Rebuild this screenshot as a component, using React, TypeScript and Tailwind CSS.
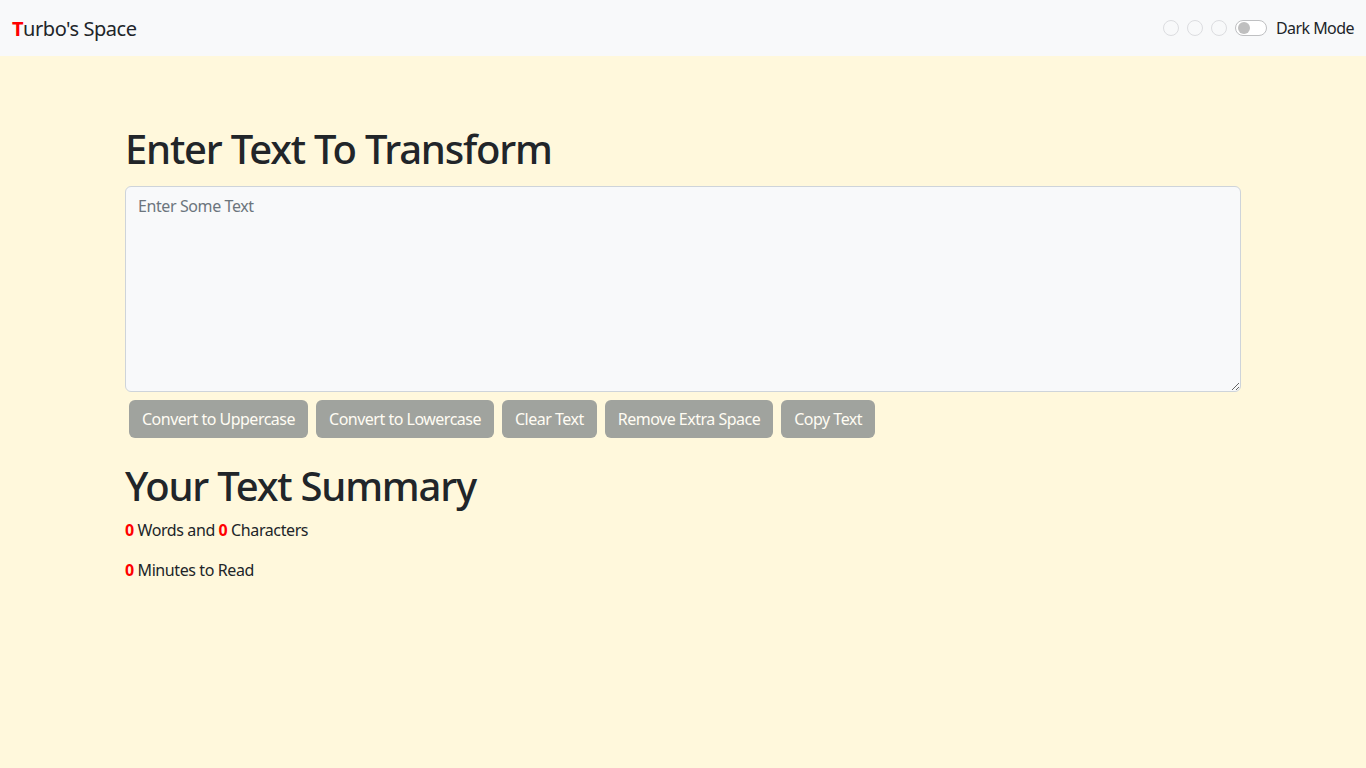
import { useState } from 'react'

const font = { fontFamily: '"Noto Sans", "Open Sans", sans-serif' }

export default function App() {
  const [text, setText] = useState('')

  const words = text.split(/\s+/).filter((w) => w.length > 0).length
  const chars = text.length
  const minutes = 0.008 * words

  const btn =
    'mx-1 rounded-md border border-transparent bg-[#a0a39e] px-3 py-[6px] text-base leading-6 tracking-[-0.5px] text-[#fffcf3] disabled:cursor-default'

  return (
    <div className="min-h-screen bg-[#fff8dc] text-[#212529] tracking-[-0.4px]" style={font}>
      <nav className="flex h-14 items-center justify-between bg-[#f8f9fa] px-3">
        <a className="pt-[2px] text-xl leading-[30px] tracking-[-0.45px] text-[#212529]" href="#">
          <span className="font-bold text-[#ff0000]">T</span>urbo's Space
        </a>
        <div className="flex items-center">
          <span className="mr-2 h-4 w-4 rounded-full border border-[#dcdde0] bg-[#f8f9fa]" />
          <span className="mr-2 h-4 w-4 rounded-full border border-[#dcdde0] bg-[#f8f9fa]" />
          <span className="mr-2 h-4 w-4 rounded-full border border-[#dcdde0] bg-[#f8f9fa]" />
          <span className="flex h-4 w-8 items-center rounded-full border border-[#bfc0c2] bg-white px-[2px]">
            <span className="h-3 w-3 rounded-full bg-[#bfbfbf]" />
          </span>
          <span className="ml-[9px] text-base leading-6 tracking-[-0.55px]">Dark Mode</span>
        </div>
      </nav>

      <div className="mx-auto w-[1140px] px-3 pt-[69px]">
        <h1 className="mb-[13px] text-[40px] font-medium leading-[48px] tracking-[-1.2px]">Enter Text To Transform</h1>
        <textarea
          className="block h-[206px] w-full resize-y rounded-md border border-[#ced4da] bg-[#f8f9fa] px-3 pb-[6px] pt-[7px] text-base leading-6 text-[#212529] outline-none placeholder:text-[#6c757d]"
          placeholder="Enter Some Text"
          value={text}
          onChange={(e) => setText(e.target.value)}
        />
        <div className="mt-2 flex">
          <button className={btn} disabled={chars === 0} onClick={() => setText(text.toUpperCase())}>
            Convert to Uppercase
          </button>
          <button className={btn} disabled={chars === 0} onClick={() => setText(text.toLowerCase())}>
            Convert to Lowercase
          </button>
          <button className={btn} disabled={chars === 0} onClick={() => setText('')}>
            Clear Text
          </button>
          <button className={btn} disabled={chars === 0} onClick={() => setText(text.split(/[ ]+/).join(' '))}>
            Remove Extra Space
          </button>
          <button className={btn} disabled={chars === 0} onClick={() => navigator.clipboard?.writeText(text)}>
            Copy Text
          </button>
        </div>

        <h1 className="mb-2 mt-6 text-[40px] font-medium leading-[48px] tracking-[-1.2px]">Your Text Summary</h1>
        <p className="mb-4 text-base leading-6">
          <b className="text-[#ff0000]">{words}</b> Words and <b className="text-[#ff0000]">{chars}</b> Characters
        </p>
        <p className="mb-4 text-base leading-6">
          <b className="text-[#ff0000]">{minutes}</b> Minutes to Read
        </p>
      </div>
    </div>
  )
}
